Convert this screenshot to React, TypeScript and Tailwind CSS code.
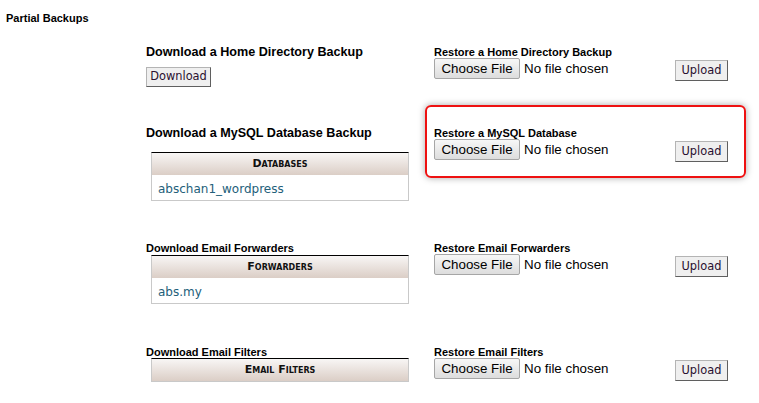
import type { ReactNode } from "react";

const SANS = "font-['Liberation_Sans',Arial,sans-serif]";
const VERD = "font-['DejaVu_Sans',Verdana,sans-serif]";

function OldButton({ label, w, h }: { label: string; w: string; h: string }) {
  return (
    <button
      className={`${VERD} ${w} ${h} flex items-center justify-center border border-t-[#b4b4b4] border-l-[#b4b4b4] border-b-[#5f5f5f] border-r-[#5f5f5f] bg-[#efefef] text-[11.4px] leading-none text-[#2a1030]`}
    >
      {label}
    </button>
  );
}

function FileInput() {
  return (
    <div className="flex items-center gap-[4px] text-[13.33px] leading-none">
      <span className="flex h-[21px] w-[86px] items-center justify-center rounded-[2px] border border-[#a6a6a6] bg-gradient-to-b from-[#f7f7f7] to-[#dddddd] text-black">
        Choose File
      </span>
      <span className="text-black">No file chosen</span>
    </div>
  );
}

function Restore({ title, children }: { title: string; children?: ReactNode }) {
  return (
    <div className="relative flex flex-col">
      {children}
      <div className="pt-[2px] text-[11px] font-bold leading-[12px]">{title}</div>
      <div className="flex items-start">
        <FileInput />
        <div className="ml-auto mt-[2px]">
          <OldButton label="Upload" w="w-[53px]" h="h-[21px]" />
        </div>
      </div>
    </div>
  );
}

function ListTable({ heading, rows }: { heading: string; rows: string[] }) {
  return (
    <div className="ml-[5px] w-[258px] border-x border-b border-t border-x-[#c9c9c9] border-b-[#c9c9c9] border-t-black">
      <div
        className={`${VERD} flex h-[22px] items-center justify-center bg-gradient-to-b from-[#f8f6f5] to-[#dbcec6] pt-px text-[11px] font-bold text-[#111] [font-variant:small-caps]`}
      >
        {heading}
      </div>
      {rows.map((r) => (
        <div
          key={r}
          className={`${VERD} flex h-[25px] items-center pl-[6px] pt-[3px] text-[12px] leading-none text-[#23607a]`}
        >
          {r}
        </div>
      ))}
    </div>
  );
}

export default function App() {
  return (
    <div className={`${SANS} h-[403px] w-[759px] overflow-hidden bg-white text-black`}>
      <div className="pl-[6px] pt-[12px] text-[11px] font-bold leading-[13px]">Partial Backups</div>

      <div className="mt-[19px] pl-[146px]">
        <div className="grid h-[81px] grid-cols-[288px_294px]">
          <div className="flex flex-col items-start">
            <div className="pt-px text-[12.6px] font-bold leading-[15px]">Download a Home Directory Backup</div>
            <div className="mt-[7px]">
              <OldButton label="Download" w="w-[65px]" h="h-[20px]" />
            </div>
          </div>
          <Restore title="Restore a Home Directory Backup" />
        </div>

        <div className="grid h-[115px] grid-cols-[288px_294px]">
          <div className="flex flex-col">
            <div className="pt-px text-[12.6px] font-bold leading-[15px]">Download a MySQL Database Backup</div>
            <div className="mt-[11px]">
              <ListTable heading="Databases" rows={["abschan1_wordpress"]} />
            </div>
          </div>
          <Restore title="Restore a MySQL Database">
            <div className="pointer-events-none absolute left-[-9px] top-[-20px] h-[73px] w-[321px] rounded-[6px] border-2 border-[#ee1111] shadow-[0_0_7px_rgba(0,0,0,0.35)]" />
          </Restore>
        </div>

        <div className="grid h-[104px] grid-cols-[288px_294px]">
          <div className="flex flex-col">
            <div className="pt-[2px] text-[11px] font-bold leading-[12px]">Download Email Forwarders</div>
            <div className="mt-px">
              <ListTable heading="Forwarders" rows={["abs.my"]} />
            </div>
          </div>
          <Restore title="Restore Email Forwarders" />
        </div>

        <div className="grid grid-cols-[288px_294px]">
          <div className="flex flex-col">
            <div className="pt-[2px] text-[11px] font-bold leading-[12px]">Download Email Filters</div>
            <div className="mt-0">
              <ListTable heading="Email Filters" rows={[]} />
            </div>
          </div>
          <Restore title="Restore Email Filters" />
        </div>
      </div>
    </div>
  );
}
